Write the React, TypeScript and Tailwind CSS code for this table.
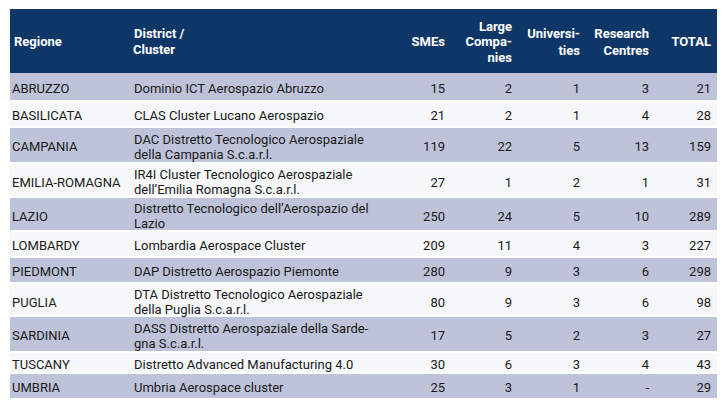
import React from "react";

type Row = {
  region: string;
  district: React.ReactNode;
  smes: string;
  large: string;
  uni: string;
  res: string;
  total: string;
  h: string;
};

const rows: Row[] = [
  { region: "ABRUZZO", district: "Dominio ICT Aerospazio Abruzzo", smes: "15", large: "2", uni: "1", res: "3", total: "21", h: "h-[29px]" },
  { region: "BASILICATA", district: "CLAS Cluster Lucano Aerospazio", smes: "21", large: "2", uni: "1", res: "4", total: "28", h: "h-[26px]" },
  { region: "CAMPANIA", district: <>DAC Distretto Tecnologico Aerospaziale<br />della Campania S.c.a.r.l.</>, smes: "119", large: "22", uni: "5", res: "13", total: "159", h: "h-[36px]" },
  { region: "EMILIA-ROMAGNA", district: <>IR4I Cluster Tecnologico Aerospaziale<br />dell’Emilia Romagna S.c.a.r.l.</>, smes: "27", large: "1", uni: "2", res: "1", total: "31", h: "h-[34px]" },
  { region: "LAZIO", district: <>Distretto Tecnologico dell’Aerospazio del<br />Lazio</>, smes: "250", large: "24", uni: "5", res: "10", total: "289", h: "h-[34px]" },
  { region: "LOMBARDY", district: "Lombardia Aerospace Cluster", smes: "209", large: "11", uni: "4", res: "3", total: "227", h: "h-[26px]" },
  { region: "PIEDMONT", district: "DAP Distretto Aerospazio Piemonte", smes: "280", large: "9", uni: "3", res: "6", total: "298", h: "h-[26px]" },
  { region: "PUGLIA", district: <>DTA Distretto Tecnologico Aerospaziale<br />della Puglia S.c.a.r.l.</>, smes: "80", large: "9", uni: "3", res: "6", total: "98", h: "h-[33px]" },
  { region: "SARDINIA", district: <>DASS Distretto Aerospaziale della Sarde-<br />gna S.c.a.r.l.</>, smes: "17", large: "5", uni: "2", res: "3", total: "27", h: "h-[36px]" },
  { region: "TUSCANY", district: "Distretto Advanced Manufacturing 4.0", smes: "30", large: "6", uni: "3", res: "4", total: "43", h: "h-[21px]" },
  { region: "UMBRIA", district: "Umbria Aerospace cluster", smes: "25", large: "3", uni: "1", res: "-", total: "29", h: "h-[26px]" },
];

const grid = "grid grid-cols-[120px_250px_70px_67px_68px_69px_63px]";

export default function App() {
  return (
    <div
      className="w-[724px] h-[403px] bg-white pt-[9px] pl-[10px]"
      style={{ fontFamily: "Roboto, 'Liberation Sans', sans-serif" }}
    >
      <div className="w-[707px]">
        <div className={`${grid} h-[64px] bg-[#0e3768] text-white font-bold text-[13px]`}>
          <div className="flex items-center pl-[4px] pt-[2px]">Regione</div>
          <div className="flex flex-col justify-center pl-[3px] leading-[16px] pt-[2px]">
            <span className="pl-[1px]">District /</span>
            <span>Cluster</span>
          </div>
          <div className="flex items-center justify-end pr-[5px] pt-[2px]">SMEs</div>
          <div className="flex flex-col justify-center items-end pr-[5px] leading-[15.5px] text-right pt-[2px]">
            <span>Large</span>
            <span>Compa-</span>
            <span>nies</span>
          </div>
          <div className="flex flex-col justify-center items-end pr-[5px] leading-[17px] text-right pt-[2px]">
            <span>Universi-</span>
            <span>ties</span>
          </div>
          <div className="flex flex-col justify-center items-end pr-[5px] leading-[17px] text-right pt-[2px]">
            <span>Research</span>
            <span>Centres</span>
          </div>
          <div className="flex items-center justify-end pr-[6px] pt-[2px]">TOTAL</div>
        </div>
        {rows.map((r, i) => (
          <div
            key={r.region}
            className={`${grid} ${r.h} ${i % 2 === 0 ? "bg-[#bec3d9]" : "bg-[#f6f7f9]"} border-b-2 border-white text-[13px] text-[#1a1a1a] leading-[15px]`}
          >
            <div className="flex items-center pl-[2px] pt-[3px]">{r.region}</div>
            <div className="flex items-center pl-[4px] pt-[3px]">
              <div>{r.district}</div>
            </div>
            <div className="flex items-center justify-end pr-[5px] pt-[3px]">{r.smes}</div>
            <div className="flex items-center justify-end pr-[5px] pt-[3px]">{r.large}</div>
            <div className="flex items-center justify-end pr-[5px] pt-[3px]">{r.uni}</div>
            <div className="flex items-center justify-end pr-[5px] pt-[3px]">{r.res}</div>
            <div className="flex items-center justify-end pr-[6px] pt-[3px]">{r.total}</div>
          </div>
        ))}
      </div>
    </div>
  );
}
